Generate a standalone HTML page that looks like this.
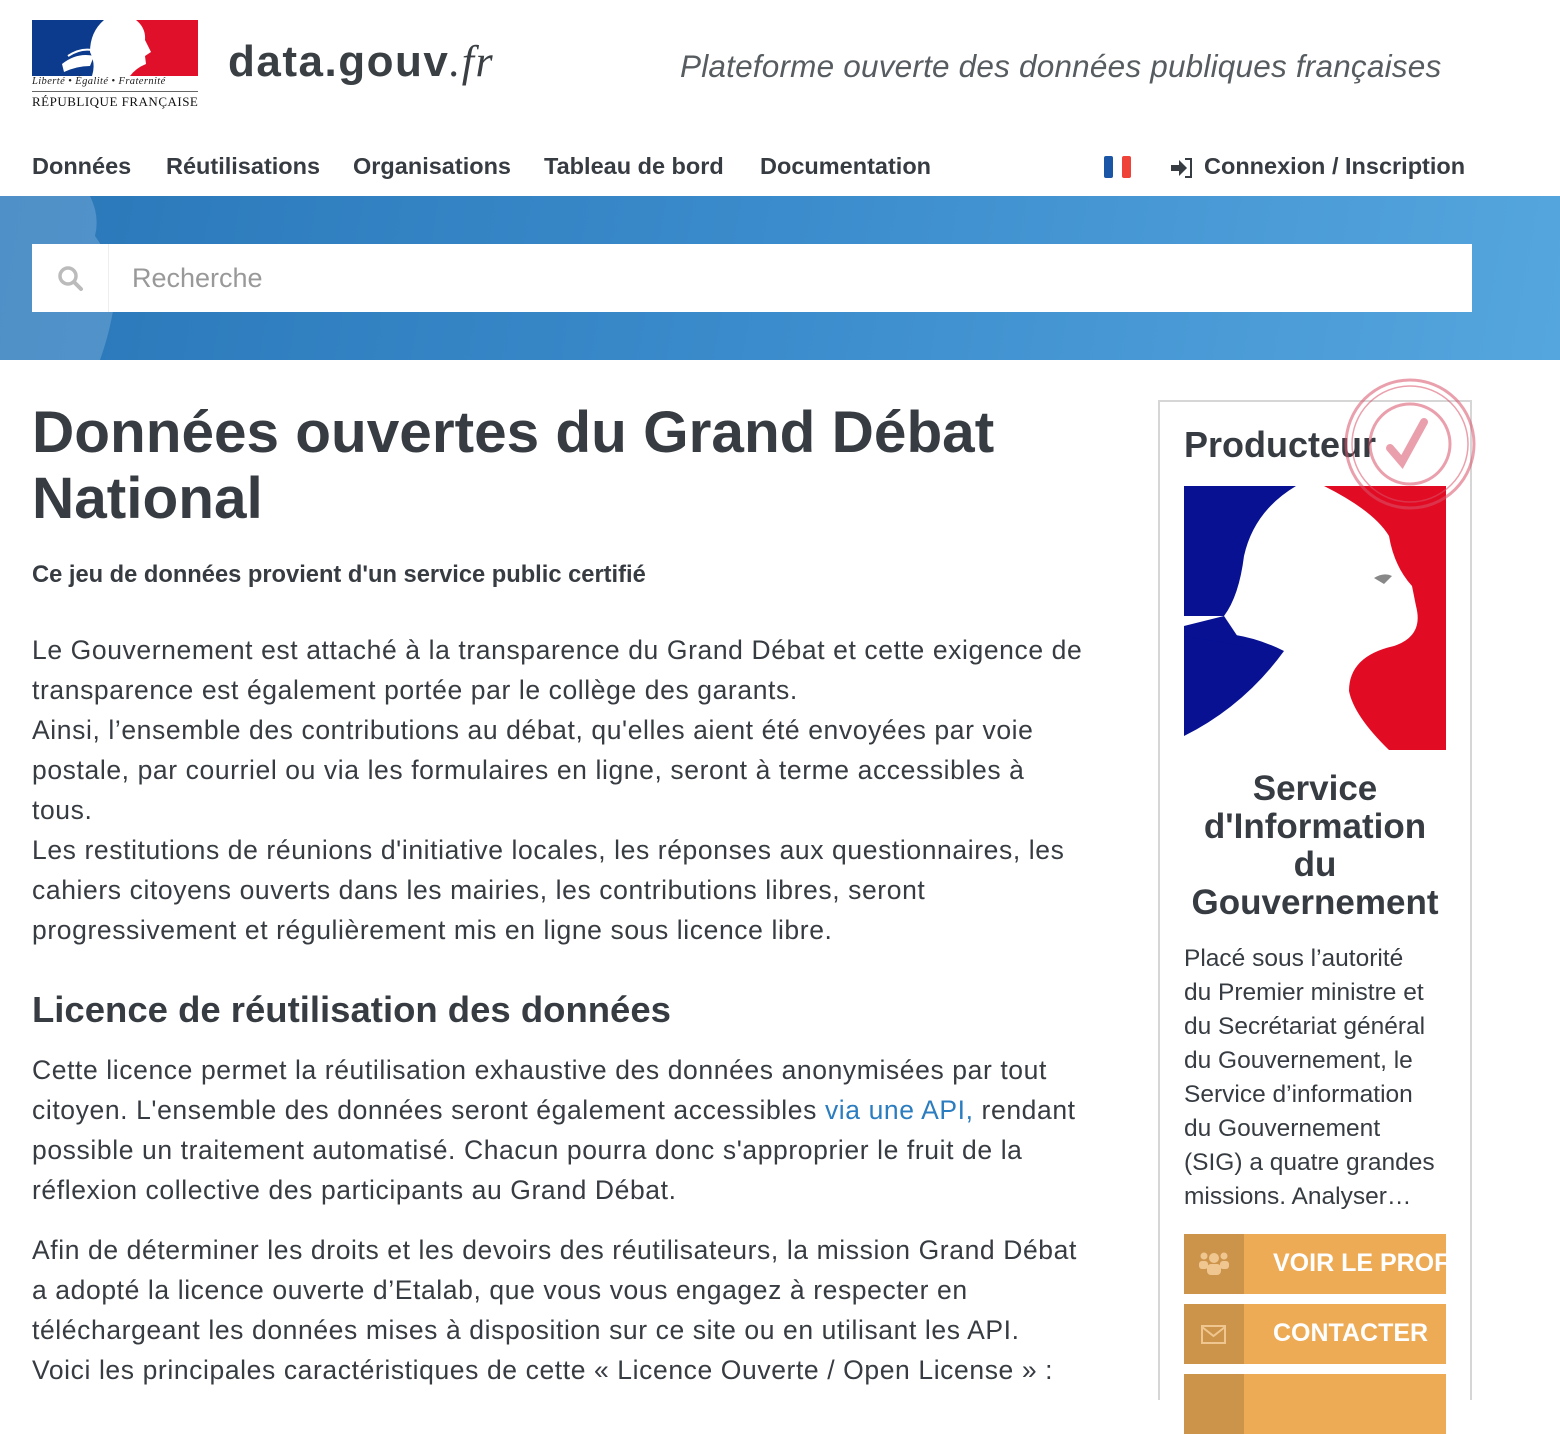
<!DOCTYPE html>
<html><head><meta charset="utf-8">
<style>
*{margin:0;padding:0;box-sizing:border-box}
body{width:1560px;height:1378px;overflow:hidden;background:#fff;font-family:"Liberation Sans",Arial,sans-serif;color:#373c42;position:relative}
.abs{position:absolute}
.nav a{position:absolute;top:153px;font-size:23.5px;font-weight:bold;color:#373c42;text-decoration:none;white-space:nowrap}
.band{left:0;top:196px;width:1560px;height:164px;background:linear-gradient(100deg,#2a77b8 0%,#3b8ccc 50%,#55a6de 100%);overflow:hidden}
.main p{font-size:26.5px;line-height:40px;letter-spacing:0.6px;white-space:nowrap}
.btn{position:absolute;left:1184px;width:262px;height:60px;background:#edab55;overflow:hidden}
.btn .ic{position:absolute;left:0;top:0;width:60px;height:60px;background:#cc944a}
.btn span{position:absolute;left:89px;top:15px;color:#fff;font-weight:bold;font-size:25px;white-space:nowrap}
</style></head><body>

<div class="abs" style="left:32px;top:20px;width:166px;height:56px;">
<svg width="166" height="56" viewBox="0 0 166 56">
<rect x="0" y="0" width="83" height="56" fill="#0c3a8c"/>
<rect x="83" y="0" width="83" height="56" fill="#e1102a"/>
<path d="M72 0 L104 0 Q114 8 113 20 L119 32 L113 36 L114 44 Q104 48 98 56 L60 56 Q64 44 58 32 Q58 12 72 0Z" fill="#fff"/>
<path d="M30 44 Q45 32 62 36 L58 46 Q45 46 32 52Z" fill="#fff"/>
<path d="M36 36 Q48 28 60 30" stroke="#fff" stroke-width="2" fill="none"/>
</svg></div>
<div class="abs" style="left:32px;top:76px;width:166px;font-family:'Liberation Serif',serif;font-style:italic;font-size:10.5px;white-space:nowrap;color:#222;letter-spacing:0.4px">Liberté • Égalité • Fraternité</div>
<div class="abs" style="left:32px;top:91px;width:166px;border-top:1px solid #666"></div>
<div class="abs" style="left:32px;top:94px;font-family:'Liberation Serif',serif;font-size:13px;white-space:nowrap;color:#111;letter-spacing:0.5px">RÉPUBLIQUE FRANÇAISE</div>

<div class="abs" style="left:228px;top:36px;font-size:44px;font-weight:bold;color:#3a3f44;white-space:nowrap;letter-spacing:1.5px">data.gouv<span style="font-family:'Liberation Serif',serif;font-style:italic;font-weight:normal">.fr</span></div>
<div class="abs" style="left:680px;top:48px;font-size:31.5px;font-style:italic;color:#575c61;white-space:nowrap;letter-spacing:0.2px">Plateforme ouverte des données publiques françaises</div>

<div class="nav">
<a style="left:32px">Données</a>
<a style="left:166px">Réutilisations</a>
<a style="left:353px">Organisations</a>
<a style="left:544px">Tableau de bord</a>
<a style="left:760px">Documentation</a>
<a style="left:1204px">Connexion / Inscription</a>
</div>
<div class="abs" style="left:1104px;top:156px;width:9px;height:22px;background:#1a56a5;border-radius:2px"></div>
<div class="abs" style="left:1122px;top:156px;width:9px;height:22px;background:#ef4238;border-radius:2px"></div>
<svg class="abs" style="left:1170px;top:157px" width="24" height="22" viewBox="0 0 24 22"><path d="M1 8h8V3l8 8-8 8v-5H1z" fill="#373c42"/><path d="M15 2h6v18h-6" fill="none" stroke="#373c42" stroke-width="2"/></svg>

<div class="abs band">
<svg class="abs" style="left:0;top:0" width="130" height="164"><path d="M0 0 L90 0 Q100 20 95 40 Q110 60 108 80 L115 100 Q112 130 100 164 L0 164Z" fill="#6fa6d6" opacity="0.55"/></svg>
</div>
<div class="abs" style="left:32px;top:244px;width:1440px;height:68px;background:#fff"></div>
<div class="abs" style="left:108px;top:244px;width:1px;height:68px;background:#eee"></div>
<svg class="abs" style="left:57px;top:265px" width="28" height="28" viewBox="0 0 28 28"><circle cx="11" cy="11" r="8" fill="none" stroke="#bbb" stroke-width="3.5"/><path d="M17 17l7 7" stroke="#bbb" stroke-width="4" stroke-linecap="round"/></svg>
<div class="abs" style="left:132px;top:263px;font-size:27px;color:#999">Recherche</div>

<div class="abs main" style="left:32px;top:400px;width:1080px">
<h1 style="font-size:58.5px;line-height:66px;font-weight:bold;color:#373c42">Données ouvertes du Grand Débat National</h1>
<div style="margin-top:30px;font-size:23.7px;font-weight:bold">Ce jeu de données provient d'un service public certifié</div>
<p style="margin-top:41px">Le Gouvernement est attaché à la transparence du Grand Débat et cette exigence de<br>transparence est également portée par le collège des garants.<br>Ainsi, l’ensemble des contributions au débat, qu'elles aient été envoyées par voie<br>postale, par courriel ou via les formulaires en ligne, seront à terme accessibles à<br>tous.<br>Les restitutions de réunions d'initiative locales, les réponses aux questionnaires, les<br>cahiers citoyens ouverts dans les mairies, les contributions libres, seront<br>progressivement et régulièrement mis en ligne sous licence libre.</p>
<h2 style="margin-top:40px;font-size:36.5px;line-height:40px;font-weight:bold">Licence de réutilisation des données</h2>
<p style="margin-top:20px">Cette licence permet la réutilisation exhaustive des données anonymisées par tout<br>citoyen. L'ensemble des données seront également accessibles <span style="color:#2b7dbf">via une API,</span> rendant<br>possible un traitement automatisé. Chacun pourra donc s'approprier le fruit de la<br>réflexion collective des participants au Grand Débat.</p>
<p style="margin-top:20px">Afin de déterminer les droits et les devoirs des réutilisateurs, la mission Grand Débat<br>a adopté la licence ouverte d’Etalab, que vous vous engagez à respecter en<br>téléchargeant les données mises à disposition sur ce site ou en utilisant les API.<br>Voici les principales caractéristiques de cette « Licence Ouverte / Open License » :</p>
</div>

<div class="abs" style="left:1158px;top:400px;width:314px;height:1000px;border:2px solid #d6d6d6;border-bottom:none"></div>
<div class="abs" style="left:1184px;top:424px;font-size:36px;font-weight:bold">Producteur</div>
<svg class="abs" style="left:1184px;top:486px" width="262" height="264" viewBox="0 0 262 264">
<rect width="262" height="264" fill="#fff"/>
<path d="M0 0H112Q70 25 60 70Q55 110 40 130L0 130Z" fill="#071192"/>
<path d="M0 150Q50 140 100 165Q60 220 0 250Z" fill="#071192"/>
<path d="M0 140L40 130L60 160L0 150Z" fill="#071192"/>
<path d="M140 0H262V264H205Q170 230 165 205Q165 170 210 160Q240 150 232 120L228 100Q210 80 205 50Q190 25 140 0Z" fill="#e10c24"/>
<path d="M190 92q10-6 18-2l-8 8z" fill="#888"/>
</svg>
<svg class="abs" style="left:1342px;top:376px;opacity:0.55" width="136" height="136" viewBox="0 0 136 136">
<circle cx="68" cy="68" r="64" fill="none" stroke="#d9546a" stroke-width="3"/>
<circle cx="68" cy="68" r="58" fill="none" stroke="#d9546a" stroke-width="1.5"/>
<circle cx="68" cy="68" r="40" fill="none" stroke="#d9546a" stroke-width="3"/>
<path d="M48 72l12 14 22-40" fill="none" stroke="#d9546a" stroke-width="8" stroke-linecap="round"/>
</svg>
<div class="abs" style="left:1184px;top:770px;width:262px;text-align:center;font-size:35px;line-height:38px;font-weight:bold">Service d'Information du Gouvernement</div>
<div class="abs" style="left:1184px;top:942px;width:262px;font-size:24.5px;line-height:34px;white-space:nowrap">Placé sous l’autorité<br>du Premier ministre et<br>du Secrétariat général<br>du Gouvernement, le<br>Service d’information<br>du Gouvernement<br>(SIG) a quatre grandes<br>missions. Analyser…</div>
<div class="btn" style="top:1234px"><div class="ic"><svg width="60" height="60"><g fill="#f0c690"><circle cx="30" cy="24" r="5"/><circle cx="20" cy="22" r="3.5"/><circle cx="40" cy="22" r="3.5"/><rect x="23" y="30" width="14" height="11" rx="4"/><rect x="15" y="27" width="9" height="8" rx="3"/><rect x="36" y="27" width="9" height="8" rx="3"/></g></svg></div><span>VOIR LE PROFIL</span></div>
<div class="btn" style="top:1304px"><div class="ic"><svg width="60" height="60"><rect x="18" y="22" width="23" height="17" fill="none" stroke="#f0c690" stroke-width="2"/><path d="M18 23l11.5 9 11.5-9" fill="none" stroke="#f0c690" stroke-width="2"/></svg></div><span>CONTACTER</span></div>
<div class="btn" style="top:1374px"><div class="ic"></div></div>
</body></html>
